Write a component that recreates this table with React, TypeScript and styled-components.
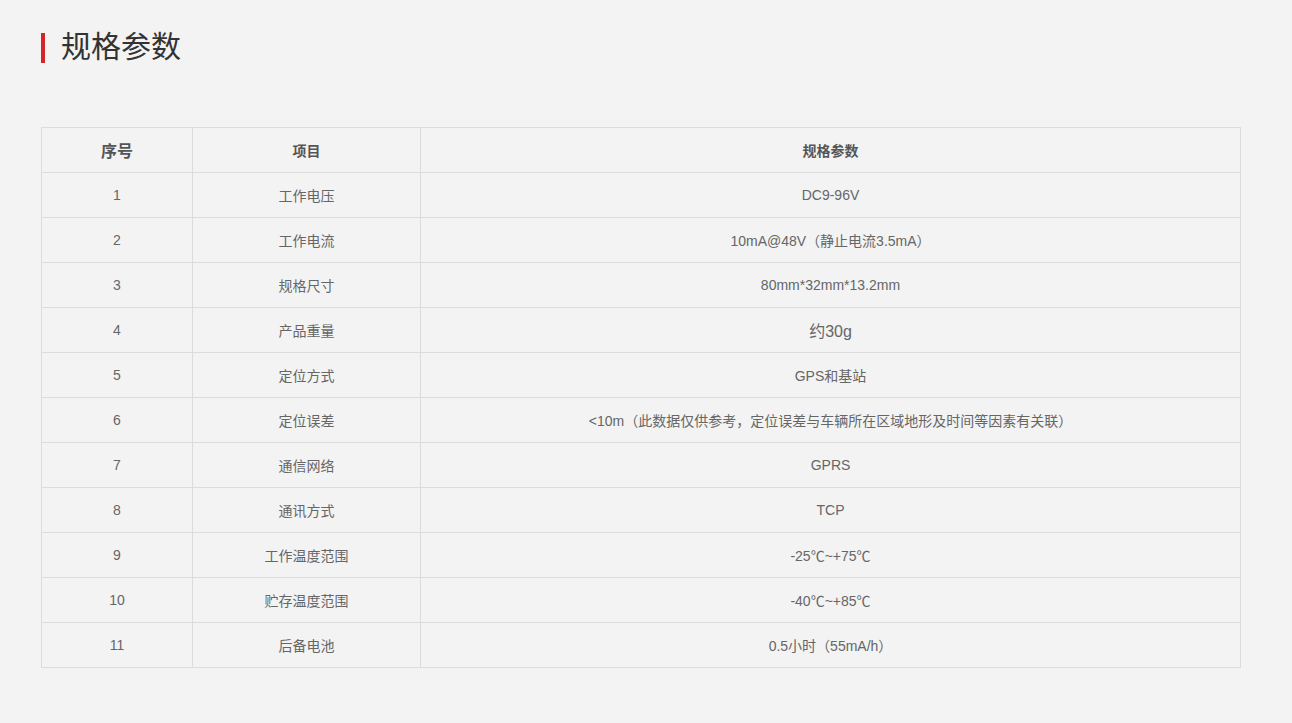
import React from "react";
import styled, { createGlobalStyle } from "styled-components";

const Global = createGlobalStyle`
  html, body { margin: 0; padding: 0; background: #f3f3f3; }
  body { font-family: "Liberation Sans", "Noto Sans CJK SC", sans-serif; }
`;

const Page = styled.div`
  padding: 30px 51px 40px 41px;
`;

const Title = styled.h2`
  margin: 0;
  display: flex;
  align-items: center;
  height: 36px;
  font-size: 30px;
  line-height: 32px;
  font-weight: normal;
  color: #333;
  &::before {
    content: "";
    width: 4px;
    height: 30px;
    background: #d2262b;
    margin-right: 16px;
  }
`;

const TitleText = styled.span`
  position: relative;
  top: -1px;
`;

const Table = styled.table`
  margin-top: 61px;
  width: 1200px;
  border-collapse: collapse;
  table-layout: fixed;
`;

const Th = styled.th<{ $big?: boolean }>`
  height: 44px;
  border: 1px solid #dcdcdc;
  font-size: ${(p) => (p.$big ? "16px" : "14px")};
  font-weight: bold;
  color: #555;
  text-align: center;
  padding: 0;
`;

const Td = styled.td<{ $big?: boolean }>`
  height: 44px;
  border: 1px solid #dcdcdc;
  font-size: ${(p) => (p.$big ? "16px" : "14px")};
  color: #666;
  text-align: center;
  padding: 0;
`;

const rows: [string, string, boolean?][] = [
  ["工作电压", "DC9-96V"],
  ["工作电流", "10mA@48V（静止电流3.5mA）"],
  ["规格尺寸", "80mm*32mm*13.2mm"],
  ["产品重量", "约30g", true],
  ["定位方式", "GPS和基站"],
  ["定位误差", "<10m（此数据仅供参考，定位误差与车辆所在区域地形及时间等因素有关联）"],
  ["通信网络", "GPRS"],
  ["通讯方式", "TCP"],
  ["工作温度范围", "-25℃~+75℃"],
  ["贮存温度范围", "-40℃~+85℃"],
  ["后备电池", "0.5小时（55mA/h）"],
];

export default function App() {
  return (
    <Page>
      <Global />
      <Title>
        <TitleText>规格参数</TitleText>
      </Title>
      <Table>
        <colgroup>
          <col style={{ width: 151 }} />
          <col style={{ width: 228 }} />
          <col />
        </colgroup>
        <thead>
          <tr>
            <Th $big>序号</Th>
            <Th>项目</Th>
            <Th>规格参数</Th>
          </tr>
        </thead>
        <tbody>
          {rows.map(([name, val, big], i) => (
            <tr key={i}>
              <Td>{i + 1}</Td>
              <Td>{name}</Td>
              <Td $big={big}>{val}</Td>
            </tr>
          ))}
        </tbody>
      </Table>
    </Page>
  );
}
